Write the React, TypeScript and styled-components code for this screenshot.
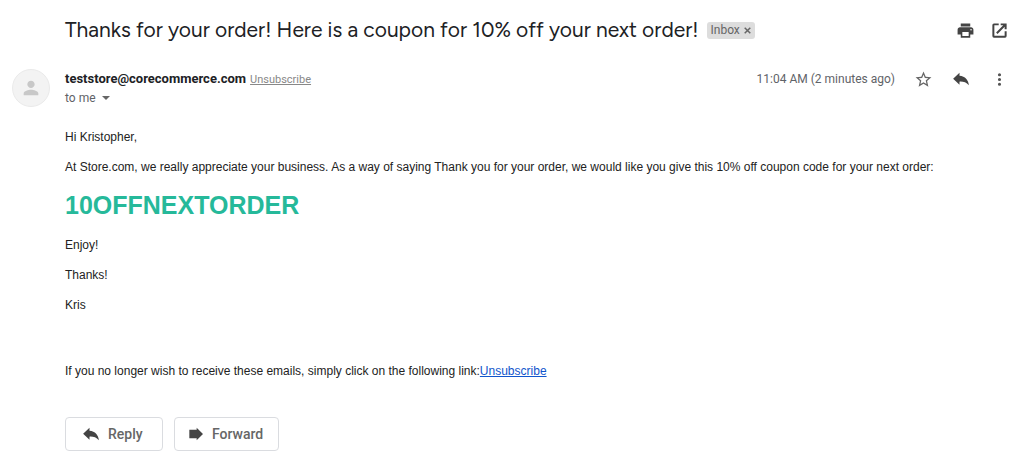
import React from "react";
import styled, { createGlobalStyle } from "styled-components";

const GlobalStyle = createGlobalStyle`
  *, *::before, *::after { box-sizing: border-box; }
  body {
    margin: 0;
    background: #fff;
    color: #202124;
    font-family: Roboto, "Liberation Sans", sans-serif;
  }
`;

const Message = styled.main`
  padding: 16px 15px 20px 12px;
`;

const SubjectRow = styled.header`
  display: flex;
  align-items: center;
  min-height: 28px;
  padding-left: 53px;
`;

const Subject = styled.h1`
  margin: 0;
  font-family: Figtree, Inter, sans-serif;
  font-size: 21px;
  font-weight: 400;
  line-height: 28px;
`;

const Label = styled.span`
  display: inline-flex;
  align-items: center;
  gap: 4px;
  height: 17px;
  margin-left: 8px;
  padding: 0 4px;
  border-radius: 3px;
  background: #ddd;
  color: #666;
  font-size: 12px;
  line-height: 17px;
`;

const LabelRemove = styled.button`
  display: flex;
  padding: 0;
  border: 0;
  background: none;
  color: inherit;
  cursor: pointer;
`;

const Actions = styled.div`
  display: flex;
  align-items: center;
  gap: 14px;
  margin-left: auto;
`;

const IconButton = styled.button<{ $tone?: string }>`
  display: flex;
  align-items: center;
  justify-content: center;
  width: 20px;
  height: 20px;
  padding: 0;
  border: 0;
  background: none;
  color: ${({ $tone }) => $tone ?? "#444"};
  cursor: pointer;
`;

const SenderRow = styled.section`
  display: flex;
  align-items: flex-start;
  margin-top: 25px;
`;

const Avatar = styled.div`
  display: flex;
  align-items: center;
  justify-content: center;
  width: 38px;
  height: 38px;
  margin-right: 15px;
  border: 1px solid #eaeaea;
  border-radius: 50%;
  background: #f3f3f3;
  color: #c8c8c8;
`;

const Sender = styled.div`
  display: flex;
  flex-direction: column;
  align-items: flex-start;
`;

const SenderLine = styled.div`
  display: flex;
  align-items: baseline;
  gap: 4px;
  line-height: 20px;
`;

const Address = styled.strong`
  font-size: 13px;
  font-weight: 700;
`;

const MutedLink = styled.a`
  color: #888;
  font-size: 11px;
`;

const Recipient = styled.button`
  display: flex;
  align-items: center;
  gap: 6px;
  padding: 0;
  border: 0;
  background: none;
  color: #5f6368;
  font-family: inherit;
  font-size: 12px;
  line-height: 16px;
  cursor: pointer;
`;

const Meta = styled.div`
  display: flex;
  align-items: center;
  gap: 18px;
  height: 20px;
  margin-left: auto;
`;

const Time = styled.time`
  color: #5f6368;
  font-size: 12px;
`;

const Body = styled.article`
  padding: 21px 0 0 53px;
  color: #222;
  font-family: "Liberation Sans", Arial, sans-serif;
  font-size: 12px;
  line-height: 18px;
`;

const Paragraph = styled.p`
  margin: 0 0 12px;
`;

const Coupon = styled.h2`
  margin: 14px 0 16px;
  color: #26b99a;
  font-size: 25px;
  font-weight: 700;
  line-height: 30px;
`;

const OptOut = styled.p`
  margin: 48px 0 0;
`;

const BodyLink = styled.a`
  color: #1155cc;
`;

const Replies = styled.footer`
  display: flex;
  gap: 11px;
  padding: 37px 0 0 53px;
`;

const ReplyButton = styled.button`
  display: flex;
  align-items: center;
  gap: 8px;
  min-width: 98px;
  height: 34px;
  padding: 0 15px 0 13px;
  border: 1px solid #dadce0;
  border-radius: 4px;
  background: #fff;
  color: #666;
  font-family: Roboto, sans-serif;
  font-size: 14px;
  font-weight: 500;
  cursor: pointer;

  svg { color: #444; }
  &:first-child { padding-left: 16px; }
`;

const Icon = ({ d, size = 19 }: { d: string; size?: number }) => (
  <svg width={size} height={size} viewBox="0 0 24 24" fill="currentColor" aria-hidden="true">
    <path d={d} />
  </svg>
);

const paths = {
  print:
    "M19 8H5c-1.660 0-3 1.340-3 3v6h4v4h12v-4h4v-6c0-1.660-1.340-3-3-3zm-3 11H8v-5h8v5zm3-7c-.55 0-1-.45-1-1s.45-1 1-1 1 .45 1 1-.45 1-1 1zm-1-9H6v4h12V3z",
  open:
    "M11 3H5a2 2 0 0 0-2 2v14a2 2 0 0 0 2 2h14a2 2 0 0 0 2-2v-6h-2.500v5.500h-13v-13H11zM13.500 3v2.500h3.200L7.700 14.500l1.800 1.800 9-9v3.200H21V3z",
  star:
    "M22 9.240l-7.190-.62L12 2 9.190 8.630 2 9.240l5.460 4.730L5.820 21 12 17.270 18.180 21l-1.630-7.030L22 9.240zM12 15.400l-3.760 2.270 1-4.280-3.320-2.880 4.380-.38L12 6.100l1.710 4.040 4.380.38-3.320 2.880 1 4.280L12 15.400z",
  more:
    "M12 8a2 2 0 1 0 0-4 2 2 0 0 0 0 4zm0 2a2 2 0 1 0 0 4 2 2 0 0 0 0-4zm0 6a2 2 0 1 0 0 4 2 2 0 0 0 0-4z",
  person:
    "M12 12c2.210 0 4-1.790 4-4s-1.790-4-4-4-4 1.790-4 4 1.790 4 4 4zm0 2c-2.670 0-8 1.340-8 4v2h16v-2c0-2.660-5.330-4-8-4z",
  reply: "M10 7.500V3.500L1.500 11.500l8.500 8v-4c5-.3 9 1 12.500 4.800C22 13.500 17.500 8 10 7.500z",
  forward: "M2 5.500h11V2.500l9.500 9.500-9.500 9.500v-3H2z",
};

export default function App() {
  return (
    <>
      <GlobalStyle />
      <Message>
        <SubjectRow>
          <Subject>Thanks for your order! Here is a coupon for 10% off your next order!</Subject>
          <Label>
            Inbox
            <LabelRemove aria-label="Remove label Inbox">
              <svg width="7" height="7" viewBox="0 0 7 7" stroke="currentColor" strokeWidth="1.500" aria-hidden="true">
                <path d="M.7.7l5.600 5.600M6.300.7L.7 6.300" />
              </svg>
            </LabelRemove>
          </Label>
          <Actions>
            <IconButton aria-label="Print all"><Icon d={paths.print} /></IconButton>
            <IconButton aria-label="Open in new window"><Icon d={paths.open} /></IconButton>
          </Actions>
        </SubjectRow>
        <SenderRow>
          <Avatar><Icon d={paths.person} size={22} /></Avatar>
          <Sender>
            <SenderLine>
              <Address>teststore@corecommerce.com</Address>
              <MutedLink href="#unsubscribe">Unsubscribe</MutedLink>
            </SenderLine>
            <Recipient aria-label="Show details">
              to me
              <svg width="8" height="4" viewBox="0 0 8 4" fill="#666" aria-hidden="true">
                <path d="M0 0h8L4 4z" />
              </svg>
            </Recipient>
          </Sender>
          <Meta>
            <Time>11:04 AM (2 minutes ago)</Time>
            <IconButton aria-label="Star" $tone="#666"><Icon d={paths.star} /></IconButton>
            <IconButton aria-label="Reply"><Icon d={paths.reply} size={18} /></IconButton>
            <IconButton aria-label="More" $tone="#555"><Icon d={paths.more} /></IconButton>
          </Meta>
        </SenderRow>
        <Body>
          <Paragraph>Hi Kristopher,</Paragraph>
          <Paragraph>
            At Store.com, we really appreciate your business. As a way of saying Thank you for your order, we would like
            you give this 10% off coupon code for your next order:
          </Paragraph>
          <Coupon>10OFFNEXTORDER</Coupon>
          <Paragraph>Enjoy!</Paragraph>
          <Paragraph>Thanks!</Paragraph>
          <Paragraph>Kris</Paragraph>
          <OptOut>
            If you no longer wish to receive these emails, simply click on the following link:
            <BodyLink href="#opt-out">Unsubscribe</BodyLink>
          </OptOut>
        </Body>
        <Replies>
          <ReplyButton><Icon d={paths.reply} size={18} />Reply</ReplyButton>
          <ReplyButton><Icon d={paths.forward} size={16} />Forward</ReplyButton>
        </Replies>
      </Message>
    </>
  );
}
